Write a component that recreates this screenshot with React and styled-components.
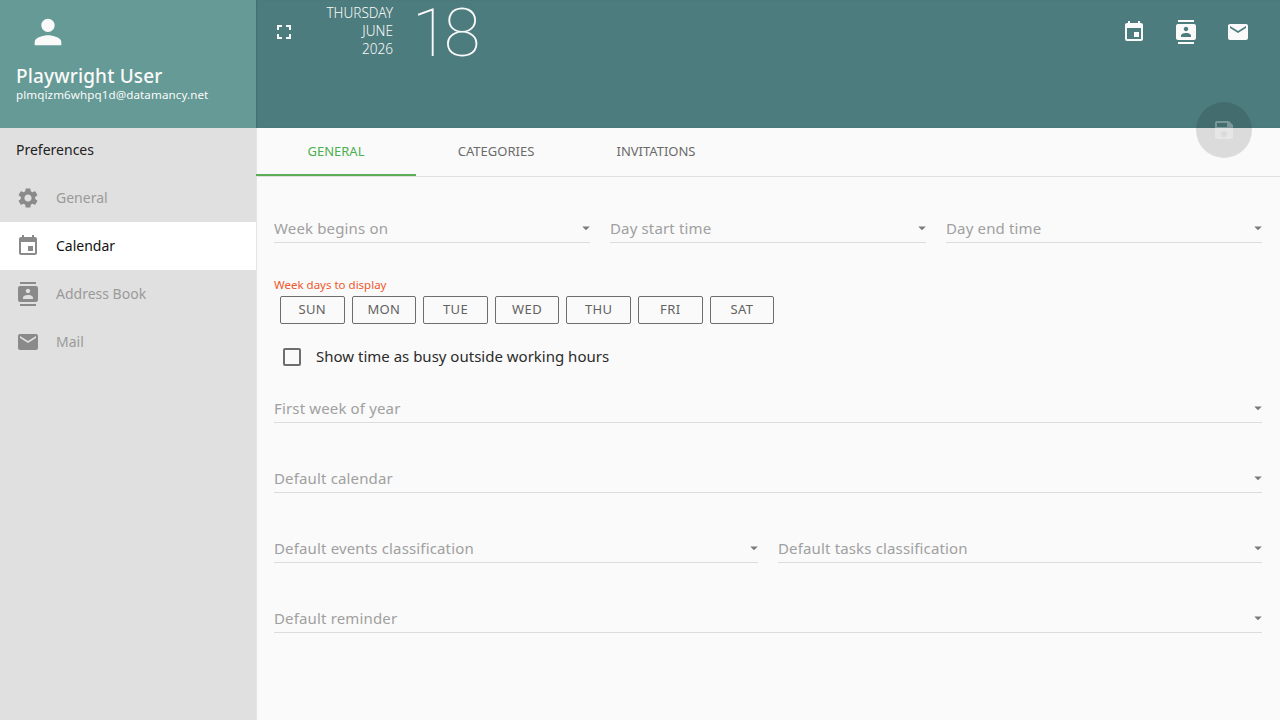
import React from 'react'
import styled, { createGlobalStyle } from 'styled-components'
import { MdPerson, MdFullscreen, MdEvent, MdContacts, MdEmail, MdSettings, MdSave, MdArrowDropDown } from 'react-icons/md'

const GlobalStyle = createGlobalStyle`
  html, body { margin: 0; padding: 0; height: 100%; background: #fafafa; overflow: hidden; }
  body { font-family: "Noto Sans", "Open Sans", sans-serif; }
  * { box-sizing: border-box; }
`

const Shell = styled.div`
  display: grid;
  grid-template-columns: 256px 1fr;
  grid-template-rows: 128px 1fr;
  width: 1280px;
  height: 720px;
  position: relative;
  overflow: hidden;
`

const UserHeader = styled.div`
  background: #659a96;
  color: #fafafa;
  padding: 8px 16px 0;
`
const Avatar = styled.div`
  height: 48px;
  width: 64px;
  display: flex;
  align-items: center;
  justify-content: center;
  svg { display: block; }
`
const UserName = styled.div`
  font-size: 19px;
  font-weight: 500;
  line-height: 24px;
  margin-top: 8px;
  letter-spacing: 0.15px;
`
const UserMail = styled.div`
  font-size: 11.6px;
  line-height: 14px;
  letter-spacing: 0.1px;
  white-space: nowrap;
`

const TopBar = styled.div`
  background: #4d7c7e;
  color: #fafafa;
  display: flex;
  align-items: flex-start;
  box-shadow: inset 1px 0 1px rgba(0, 0, 0, 0.12);
  padding: 8px 18px 0 4px;
`
const IconButton = styled.div`
  width: 48px;
  height: 48px;
  display: flex;
  align-items: center;
  justify-content: center;
  svg { display: block; }
`
const DateText = styled.div`
  width: 73px;
  margin-left: 12px;
  margin-top: -4px;
  text-align: right;
  font-size: 13.6px;
  line-height: 18px;
  font-weight: 300;
`
const DayNumber = styled.div`
  font-family: Roboto, sans-serif;
  font-weight: 100;
  font-size: 67px;
  line-height: 64px;
  letter-spacing: -5px;
  margin-left: 19px;
  margin-top: -7px;
`
const Spacer = styled.div`
  flex: 1;
`
const TopIcons = styled.div`
  display: flex;
  gap: 4px;
`

const Sidebar = styled.div`
  background: #e0e0e0;
  border-right: 1px solid #e4e4e4;
  width: 257px;
`
const SidebarTitle = styled.div`
  height: 46px;
  padding: 0 16px;
  line-height: 44px;
  font-size: 14px;
  color: #212121;
`
const NavItem = styled.div`
  height: 48px;
  display: flex;
  align-items: center;
  padding-left: 16px;
  gap: 16px;
  font-size: 14px;
  color: ${p => (p.$active ? '#111' : '#9a9a9a')};
  background: ${p => (p.$active ? '#fff' : 'transparent')};
  svg { color: #8a8a8a; display: block; }
  span { padding-bottom: 2px; }
`

const Main = styled.div`
  background: #fafafa;
  display: flex;
  flex-direction: column;
  margin-left: 1px;
`
const TabBar = styled.div`
  display: flex;
  height: 49px;
  border-bottom: 1px solid #e0e0e0;
`
const Tab = styled.div`
  width: 160px;
  height: 48px;
  display: flex;
  align-items: center;
  justify-content: center;
  padding-bottom: 2px;
  font-size: 13px;
  color: ${p => (p.$active ? '#4caf50' : '#6b6b6b')};
  box-shadow: ${p => (p.$active ? 'inset 0 -2px 0 #5cae56' : 'none')};
  margin-left: ${p => (p.$active ? '-1px' : '0')};
`
const Form = styled.div`
  padding: 24px 18px 0 17px;
`
const Row = styled.div`
  display: flex;
  gap: 20px;
  margin-bottom: ${p => p.$mb ?? 0}px;
`
const Select = styled.div`
  flex: 1;
  height: 70px;
  padding-top: 17px;
`
const SelectInner = styled.div`
  height: 25px;
  border-bottom: 1px solid #dcdcdc;
  padding-bottom: 4px;
  display: flex;
  align-items: center;
  justify-content: space-between;
  font-size: 15px;
  letter-spacing: 0.15px;
  color: #a0a0a0;
  svg { color: #7a7a7a; display: block; margin-right: -5px; }
`
const DaysLabel = styled.div`
  font-size: 11.5px;
  line-height: 14px;
  color: #f0572a;
`
const DaysRow = styled.div`
  display: flex;
  gap: 7px;
  padding-left: 6px;
  margin-top: 4px;
`
const DayButton = styled.div`
  width: 64.6px;
  height: 28px;
  border: 1px solid #6e6e6e;
  border-radius: 2px;
  display: flex;
  align-items: center;
  justify-content: center;
  padding-bottom: 2px;
  font-size: 13px;
  letter-spacing: 0.4px;
  color: #616161;
`
const CheckRow = styled.div`
  display: flex;
  align-items: center;
  height: 48px;
  margin-top: 9px;
  padding-left: 9px;
  gap: 15px;
  font-size: 15px;
  color: #2b2b2b;
`
const CheckLabel = styled.span`
  padding-bottom: 3px;
`
const Box = styled.div`
  width: 18px;
  height: 18px;
  border: 2px solid #6e6e6e;
  border-radius: 2px;
`
const Fab = styled.div`
  position: absolute;
  left: 1196px;
  top: 102px;
  width: 56px;
  height: 56px;
  border-radius: 50%;
  background: rgba(0, 0, 0, 0.12);
  display: flex;
  align-items: center;
  justify-content: center;
  color: rgba(255, 255, 255, 0.3);
  svg { display: block; }
`

const Field = ({ label }) => (
  <Select>
    <SelectInner>
      {label}
      <MdArrowDropDown size={18} />
    </SelectInner>
  </Select>
)

const days = ['SUN', 'MON', 'TUE', 'WED', 'THU', 'FRI', 'SAT']

export default function App() {
  return (
    <Shell>
      <GlobalStyle />
      <UserHeader>
        <Avatar><MdPerson size={40} /></Avatar>
        <UserName>Playwright User</UserName>
        <UserMail>plmqizm6whpq1d@datamancy.net</UserMail>
      </UserHeader>
      <TopBar>
        <IconButton><MdFullscreen size={24} /></IconButton>
        <DateText>THURSDAY<br />JUNE<br />2026</DateText>
        <DayNumber>18</DayNumber>
        <Spacer />
        <TopIcons>
          <IconButton><MdEvent size={24} /></IconButton>
          <IconButton><MdContacts size={24} /></IconButton>
          <IconButton><MdEmail size={24} /></IconButton>
        </TopIcons>
      </TopBar>
      <Sidebar>
        <SidebarTitle>Preferences</SidebarTitle>
        <NavItem><MdSettings size={24} /><span>General</span></NavItem>
        <NavItem $active><MdEvent size={24} /><span>Calendar</span></NavItem>
        <NavItem><MdContacts size={24} /><span>Address Book</span></NavItem>
        <NavItem><MdEmail size={24} /><span>Mail</span></NavItem>
      </Sidebar>
      <Main>
        <TabBar>
          <Tab $active>GENERAL</Tab>
          <Tab>CATEGORIES</Tab>
          <Tab>INVITATIONS</Tab>
        </TabBar>
        <Form>
          <Row $mb={7}>
            <Field label="Week begins on" />
            <Field label="Day start time" />
            <Field label="Day end time" />
          </Row>
          <DaysLabel>Week days to display</DaysLabel>
          <DaysRow>
            {days.map(d => <DayButton key={d}>{d}</DayButton>)}
          </DaysRow>
          <CheckRow><Box /><CheckLabel>Show time as busy outside working hours</CheckLabel></CheckRow>
          <Row><Field label="First week of year" /></Row>
          <Row><Field label="Default calendar" /></Row>
          <Row>
            <Field label="Default events classification" />
            <Field label="Default tasks classification" />
          </Row>
          <Row><Field label="Default reminder" /></Row>
        </Form>
      </Main>
      <Fab><MdSave size={24} /></Fab>
    </Shell>
  )
}
